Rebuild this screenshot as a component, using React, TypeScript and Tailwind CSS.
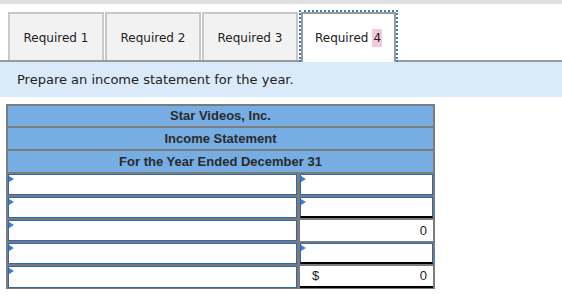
import React from "react";

const tabs = ["Required 1", "Required 2", "Required 3"];

type Cell = { kind: "input" | "total"; underline?: boolean; value?: string; dollar?: boolean };

const rows: { right: Cell }[] = [
  { right: { kind: "input" } },
  { right: { kind: "input", underline: true } },
  { right: { kind: "total", value: "0" } },
  { right: { kind: "input", underline: true } },
  { right: { kind: "total", value: "0", dollar: true, underline: true } },
];

function InputCell({ underline }: { underline?: boolean }) {
  return (
    <div
      className={`relative h-full bg-white border border-[#2f67b1] ${
        underline ? "border-b-2 border-b-black" : ""
      }`}
    >
      {/* dropdown marker */}
      <span className="absolute top-[1px] left-0 w-0 h-0 border-y-[3px] border-y-transparent border-l-[5px] border-l-[#3a7fd6]" />
    </div>
  );
}

function TotalCell({ cell }: { cell: Cell }) {
  return (
    <div
      className={`h-full bg-white flex items-center justify-between pl-[12px] pr-[6px] text-[13px] text-[#222] ${
        cell.underline ? "border-b-2 border-black" : ""
      }`}
    >
      <span>{cell.dollar ? "$" : ""}</span>
      <span>{cell.value}</span>
    </div>
  );
}

export default function App() {
  return (
    <div className="w-[562px] h-[298px] bg-white overflow-hidden font-['DejaVu_Sans',Verdana,sans-serif]">
      <div className="h-[4px] bg-[#e0e0e0]" />

      {/* Tabs */}
      <div className="mt-[6px] pl-[8px] flex items-end gap-px border-b-2 border-[#999]">
        {tabs.map((t) => (
          <div
            key={t}
            className="w-[96px] h-[48px] border-2 border-b-0 border-[#c8c8c8] bg-[#f2f2f2] flex items-center justify-center pt-px text-[12px] text-[#222]"
          >
            {t}
          </div>
        ))}
        <div className="w-[99px] h-[52px] -mb-[2px] border-2 border-b-0 border-dotted border-[#3a7dc9]">
          <div className="h-full border-2 border-b-0 border-[#9a9a9a] bg-white flex items-center justify-center text-[12px] text-[#222]">
            Required <span className="ml-[4px] bg-[#f6c8de] px-px">4</span>
          </div>
        </div>
      </div>

      {/* Instruction */}
      <div className="h-[35px] bg-[#dbeaf8] pl-[17px] flex items-center text-[13px] text-[#222]">
        Prepare an income statement for the year.
      </div>

      {/* Statement */}
      <div className="mt-[7px] ml-[6px] w-[429px] bg-[#7b7b7b] p-[2px] flex flex-col gap-[2px] font-['Liberation_Sans',Arial,sans-serif]">
        <div className="h-[20px] bg-[#76ade3] flex items-center justify-center text-[13px] font-bold text-[#2a2a2a]">
          Star Videos, Inc.
        </div>
        <div className="h-[21px] bg-[#76ade3] flex items-center justify-center text-[13px] font-bold text-[#2a2a2a]">
          Income Statement
        </div>
        <div className="h-[21px] bg-[#76ade3] flex items-center justify-center text-[13px] font-bold text-[#2a2a2a]">
          For the Year Ended December 31
        </div>
        {rows.map((r, i) => (
          <div key={i} className="h-[21px] grid grid-cols-[289px_1fr] gap-[3px]">
            <InputCell />
            {r.right.kind === "input" ? (
              <InputCell underline={r.right.underline} />
            ) : (
              <TotalCell cell={r.right} />
            )}
          </div>
        ))}
      </div>
    </div>
  );
}
